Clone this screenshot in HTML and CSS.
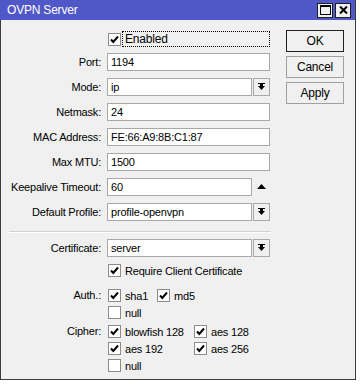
FILE: index.html
```html
<!DOCTYPE html>
<html>
<head>
<meta charset="utf-8">
<link rel="stylesheet" href="styles.css">
</head>
<body>
<div class="window">
  <div class="titlebar">
    <span class="title">OVPN Server</span>
    <div class="tb-btns">
      <span class="tb-btn"><svg width="11" height="10" viewBox="0 0 11 10"><rect x="0.5" y="0.5" width="10" height="9" fill="none" stroke="#000"/><rect x="0" y="0" width="11" height="2" fill="#000"/></svg></span>
      <span class="tb-btn"><svg width="9" height="8" viewBox="0 0 9 8"><path d="M1 0.5 L8 7.5 M8 0.5 L1 7.5" stroke="#000" stroke-width="2"/></svg></span>
    </div>
  </div>
  <div class="content">
    <div class="form">
      <div class="row r-enabled"><span class="lbl"></span>
        <div class="field chk-field"><span class="cb on"><svg width="11" height="11" viewBox="0 0 11 11"><path d="M2 5.5 L4.3 8 L9 2.5" fill="none" stroke="#000" stroke-width="2"/></svg></span><span class="focus">Enabled</span></div>
      </div>
      <div class="row r-first"><span class="lbl">Port:</span><div class="field"><span class="input">1194</span></div></div>
      <div class="row"><span class="lbl">Mode:</span><div class="field sel"><span class="input">ip</span><span class="dd"><svg width="7" height="8" viewBox="0 0 7 8"><rect x="0" y="0" width="7" height="1" fill="#000"/><rect x="2" y="1" width="3" height="3" fill="#000"/><path d="M0 3 L7 3 L3.5 7 Z" fill="#000"/></svg></span></div></div>
      <div class="row"><span class="lbl">Netmask:</span><div class="field"><span class="input">24</span></div></div>
      <div class="row"><span class="lbl">MAC Address:</span><div class="field"><span class="input">FE:66:A9:8B:C1:87</span></div></div>
      <div class="row"><span class="lbl">Max MTU:</span><div class="field"><span class="input">1500</span></div></div>
      <div class="row"><span class="lbl">Keepalive Timeout:</span><div class="field sel"><span class="input">60</span><span class="up"><svg width="9" height="5" viewBox="0 0 9 5"><path d="M0 5 L9 5 L4.5 0 Z" fill="#000"/></svg></span></div></div>
      <div class="row"><span class="lbl">Default Profile:</span><div class="field sel"><span class="input">profile-openvpn</span><span class="dd"><svg width="7" height="8" viewBox="0 0 7 8"><rect x="0" y="0" width="7" height="1" fill="#000"/><rect x="2" y="1" width="3" height="3" fill="#000"/><path d="M0 3 L7 3 L3.5 7 Z" fill="#000"/></svg></span></div></div>
      <div class="sep"></div>
      <div class="row r-cert"><span class="lbl">Certificate:</span><div class="field sel"><span class="input">server</span><span class="dd"><svg width="7" height="8" viewBox="0 0 7 8"><rect x="0" y="0" width="7" height="1" fill="#000"/><rect x="2" y="1" width="3" height="3" fill="#000"/><path d="M0 3 L7 3 L3.5 7 Z" fill="#000"/></svg></span></div></div>
      <div class="row crow r-req"><span class="lbl"></span>
        <div class="field"><span class="item"><span class="cb on"><svg width="11" height="11" viewBox="0 0 11 11"><path d="M2 5.5 L4.3 8 L9 2.5" fill="none" stroke="#000" stroke-width="2"/></svg></span>Require Client Certificate</span></div>
      </div>
      <div class="row crow r-auth"><span class="lbl">Auth.:</span>
        <div class="field grid auth">
          <span class="item"><span class="cb on"><svg width="11" height="11" viewBox="0 0 11 11"><path d="M2 5.5 L4.3 8 L9 2.5" fill="none" stroke="#000" stroke-width="2"/></svg></span>sha1</span>
          <span class="item"><span class="cb on"><svg width="11" height="11" viewBox="0 0 11 11"><path d="M2 5.5 L4.3 8 L9 2.5" fill="none" stroke="#000" stroke-width="2"/></svg></span>md5</span>
          <span class="item"><span class="cb"></span>null</span>
        </div>
      </div>
      <div class="row crow r-cipher"><span class="lbl">Cipher:</span>
        <div class="field grid cipher">
          <span class="item"><span class="cb on"><svg width="11" height="11" viewBox="0 0 11 11"><path d="M2 5.5 L4.3 8 L9 2.5" fill="none" stroke="#000" stroke-width="2"/></svg></span>blowfish 128</span>
          <span class="item"><span class="cb on"><svg width="11" height="11" viewBox="0 0 11 11"><path d="M2 5.5 L4.3 8 L9 2.5" fill="none" stroke="#000" stroke-width="2"/></svg></span>aes 128</span>
          <span class="item"><span class="cb on"><svg width="11" height="11" viewBox="0 0 11 11"><path d="M2 5.5 L4.3 8 L9 2.5" fill="none" stroke="#000" stroke-width="2"/></svg></span>aes 192</span>
          <span class="item"><span class="cb on"><svg width="11" height="11" viewBox="0 0 11 11"><path d="M2 5.5 L4.3 8 L9 2.5" fill="none" stroke="#000" stroke-width="2"/></svg></span>aes 256</span>
          <span class="item"><span class="cb"></span>null</span>
        </div>
      </div>
    </div>
    <div class="buttons">
      <span class="btn default">OK</span>
      <span class="btn">Cancel</span>
      <span class="btn">Apply</span>
    </div>
  </div>
</div>
</body>
</html>
```

FILE: styles.css
```css
html, body {
  margin: 0;
  padding: 0;
  background: #fff;
}
body {
  font-family: "Liberation Sans", Arial, sans-serif;
  font-size: 11px;
  letter-spacing: -0.2px;
  color: #000;
}
.window {
  width: 356px;
  height: 380px;
  box-sizing: border-box;
  border: 1px solid #3c3c3c;
  border-top: 0;
  background: #f0f0f0;
}
.titlebar {
  height: 20px;
  margin: 0 -1px;
  background: #5058c8;
  color: #fff;
  display: flex;
  align-items: center;
  justify-content: space-between;
  padding-left: 7px;
  padding-right: 4px;
  border-right: 1px solid #3c3c3c;
}
.title {
  font-size: 12px;
}
.tb-btns {
  display: flex;
  gap: 2px;
}
.tb-btn {
  width: 14px;
  height: 13px;
  background: #f0f0f0;
  border: 1px solid #202020;
  display: flex;
  align-items: center;
  justify-content: center;
}
.content {
  display: flex;
  padding-top: 10px;
}
.form {
  width: 269px;
}
.row {
  display: grid;
  grid-template-columns: 100px 163px;
  column-gap: 6px;
  margin-top: 7px;
  height: 18px;
}
.r-enabled { margin-top: 0; }
.r-first { margin-top: 5px; }
.r-cert { margin-top: 6px; }
.lbl {
  text-align: right;
  line-height: 18px;
  white-space: nowrap;
}
.crow { height: auto; }
.crow .lbl { line-height: 17px; }
.r-req { margin-top: 5px; }
.r-auth { margin-top: 8px; }
.r-cipher { margin-top: 2px; }
.field {
  display: flex;
  align-items: center;
}
.input {
  flex: 1;
  height: 18px;
  box-sizing: border-box;
  border: 1px solid #a8a8a8;
  background: #fff;
  padding-left: 3px;
  line-height: 16px;
  white-space: nowrap;
  overflow: hidden;
}
.sel .input {
  flex: none;
  width: 145px;
}
.dd {
  width: 17px;
  height: 18px;
  box-sizing: border-box;
  margin-left: 1px;
  border: 1px solid #a8a8a8;
  background: #f0f0f0;
  display: flex;
  align-items: center;
  justify-content: center;
}
.up {
  width: 18px;
  display: flex;
  justify-content: center;
  align-items: center;
  padding-bottom: 2px;
}
.cb {
  width: 13px;
  height: 13px;
  box-sizing: border-box;
  border: 1px solid #8c8c8c;
  background: #fff;
  display: inline-flex;
  align-items: center;
  justify-content: center;
  flex: none;
}
.chk-field .cb { margin-left: 1px; }
.focus {
  flex: 1;
  margin-left: 1px;
  height: 16px;
  box-sizing: border-box;
  border: 1px dotted #000;
  padding-left: 2px;
  line-height: 14px;
  font-size: 12px;
}
.item {
  display: flex;
  align-items: center;
  gap: 4px;
  height: 17px;
  white-space: nowrap;
  padding-left: 1px;
}
.grid {
  display: grid;
  align-items: start;
}
.auth { grid-template-columns: 49px 60px; }
.cipher { grid-template-columns: 86px 70px; }
.sep {
  margin: 10px 0 0 8px;
  width: 262px;
  height: 1px;
  background: #d0d0d0;
  border-bottom: 1px solid #fff;
}
.buttons {
  margin-left: 16px;
  display: flex;
  flex-direction: column;
  gap: 4px;
}
.btn {
  width: 58px;
  height: 22px;
  box-sizing: border-box;
  border: 1px solid #a0a0a0;
  background: #f0f0f0;
  display: flex;
  align-items: center;
  justify-content: center;
  font-size: 12px;
}
.btn.default {
  border-color: #202020;
}
```
